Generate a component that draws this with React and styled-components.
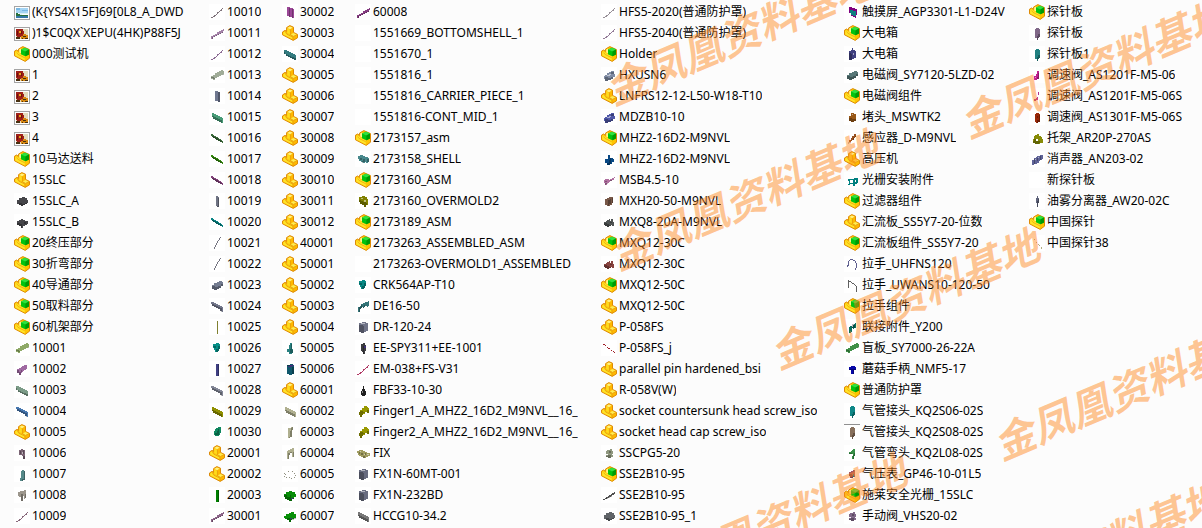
import React from 'react'
import styled, { createGlobalStyle } from 'styled-components'

// [label, shape, colour]
const COLUMNS = [
  [
    ['(K{YS4X15F]69[0L8_A_DWD', 'landscape'],
    [')1$C0QX`XEPU(4HK)P88F5J', 'flower'],
    ['000测试机', 'assembly'],
    ['1', 'flower'],
    ['2', 'flower'],
    ['3', 'flower'],
    ['4', 'flower'],
    ['10马达送料', 'assembly'],
    ['15SLC', 'part'],
    ['15SLC_A', 'gear', '#46464a'],
    ['15SLC_B', 'knob', '#46464a'],
    ['20终压部分', 'assembly'],
    ['30折弯部分', 'assembly'],
    ['40导通部分', 'assembly'],
    ['50取料部分', 'assembly'],
    ['60机架部分', 'assembly'],
    ['10001', 'plateUp', '#8faa68'],
    ['10002', 'hookUp', '#a06aa2'],
    ['10003', 'plateDown', '#7c9c88'],
    ['10004', 'boneDown', '#4878b0'],
    ['10005', 'part'],
    ['10006', 'clamp', '#7c6676'],
    ['10007', 'post', '#568a8a'],
    ['10008', 'stool', '#9c968c'],
    ['10009', 'thinUp', '#8a6a7c'],
  ],
  [
    ['10010', 'thinUp', '#80747c'],
    ['10011', 'rodUp', '#a482a8'],
    ['10012', 'thinUp', '#8c6c94'],
    ['10013', 'plateUp', '#a0ac98'],
    ['10014', 'slab', '#707890'],
    ['10015', 'rodDown', '#489c78'],
    ['10016', 'stickDown', '#3c6c3c'],
    ['10017', 'stickDown', '#348810'],
    ['10018', 'stickDown', '#84447c'],
    ['10019', 'pillar', '#707484'],
    ['10020', 'stickDown', '#088484'],
    ['10021', 'curve', '#747480'],
    ['10022', 'curve', '#747480'],
    ['10023', 'block', '#747c90'],
    ['10024', 'boneDown', '#74788c'],
    ['10025', 'line', '#808030'],
    ['10026', 'bracket', '#089088'],
    ['10027', 'bar', '#404084'],
    ['10028', 'boneDown', '#848898'],
    ['10029', 'rodDown', '#909000'],
    ['10030', 'oval', '#108860'],
    ['20001', 'part'],
    ['20002', 'part'],
    ['20003', 'bar', '#008000'],
    ['30001', 'rodUp', '#8c6488'],
  ],
  [
    ['30002', 'panel', '#9c4898'],
    ['30003', 'part'],
    ['30004', 'plateDown', '#347c80'],
    ['30005', 'part'],
    ['30006', 'part'],
    ['30007', 'part'],
    ['30008', 'part'],
    ['30009', 'part'],
    ['30010', 'part'],
    ['30011', 'part'],
    ['30012', 'part'],
    ['40001', 'part'],
    ['50001', 'part'],
    ['50002', 'part'],
    ['50003', 'part'],
    ['50004', 'part'],
    ['50005', 'boot', '#288080'],
    ['50006', 'canister', '#10586c'],
    ['60001', 'part'],
    ['60002', 'rodDown', '#b0b090'],
    ['60003', 'flag', '#b0b090'],
    ['60004', 'arch', '#b0b090'],
    ['60005', 'dots', '#909080'],
    ['60006', 'cloud', '#088c08'],
    ['60007', 'tree', '#089008'],
  ],
  [
    ['60008', 'rodUp', '#843c80'],
    ['1551669_BOTTOMSHELL_1', 'blank'],
    ['1551670_1', 'blank'],
    ['1551816_1', 'blank'],
    ['1551816_CARRIER_PIECE_1', 'blank'],
    ['1551816-CONT_MID_1', 'blank'],
    ['2173157_asm', 'assembly'],
    ['2173158_SHELL', 'shell', '#48888c'],
    ['2173160_ASM', 'assembly'],
    ['2173160_OVERMOLD2', 'ring', '#808000'],
    ['2173189_ASM', 'assembly'],
    ['2173263_ASSEMBLED_ASM', 'assembly'],
    ['2173263-OVERMOLD1_ASSEMBLED', 'blank'],
    ['CRK564AP-T10', 'bracket', '#088884'],
    ['DE16-50', 'bridge', '#347478'],
    ['DR-120-24', 'cube', '#707488'],
    ['EE-SPY311+EE-1001', 'sensor', '#3c3c40'],
    ['EM-038+FS-V31', 'thinUp', '#b03864'],
    ['FBF33-10-30', 'bottle', '#202020'],
    ['Finger1_A_MHZ2_16D2_M9NVL__16_', 'finger', '#989800'],
    ['Finger2_A_MHZ2_16D2_M9NVL__16_', 'finger', '#989800'],
    ['FIX', 'fixture', '#a09c60'],
    ['FX1N-60MT-001', 'cube', '#686c80'],
    ['FX1N-232BD', 'cube', '#686c80'],
    ['HCCG10-34.2', 'rodDown', '#787878'],
  ],
  [
    ['HFS5-2020(普通防护罩)', 'thinUp', '#989098'],
    ['HFS5-2040(普通防护罩)', 'thinUp', '#947c98'],
    ['Holder', 'assembly'],
    ['HXUSN6', 'spool', '#808ca4'],
    ['LNFRS12-12-L50-W18-T10', 'part'],
    ['MDZB10-10', 'spool', '#5058a8'],
    ['MHZ2-16D2-M9NVL', 'assembly'],
    ['MHZ2-16D2-M9NVL', 'gripper', '#084884'],
    ['MSB4.5-10', 'bolt', '#b070a0'],
    ['MXH20-50-M9NVL', 'slider', '#785848'],
    ['MXQ8-20A-M9NVL', 'table', '#505454'],
    ['MXQ12-30C', 'assembly'],
    ['MXQ12-30C', 'table', '#884440'],
    ['MXQ12-50C', 'assembly'],
    ['MXQ12-50C', 'part'],
    ['P-058FS', 'part'],
    ['P-058FS_j', 'pin', '#a02028'],
    ['parallel pin hardened_bsi', 'part'],
    ['R-058V(W)', 'part'],
    ['socket countersunk head screw_iso', 'part'],
    ['socket head cap screw_iso', 'part'],
    ['SSCPG5-20', 'bud', '#909880'],
    ['SSE2B10-95', 'assembly'],
    ['SSE2B10-95', 'rail', '#505050'],
    ['SSE2B10-95_1', 'gear', '#606468'],
  ],
  [
    ['触摸屏_AGP3301-L1-D24V', 'screen', '#800080'],
    ['大电箱', 'assembly'],
    ['大电箱', 'cabinet', '#404080'],
    ['电磁阀_SY7120-5LZD-02', 'block', '#587878'],
    ['电磁阀组件', 'assembly'],
    ['堵头_MSWTK2', 'plug', '#985818'],
    ['感应器_D-M9NVL', 'probe', '#985020'],
    ['高压机', 'part'],
    ['光栅安装附件', 'mount', '#008080'],
    ['过滤器组件', 'assembly'],
    ['汇流板_SS5Y7-20-位数', 'part'],
    ['汇流板组件_SS5Y7-20', 'assembly'],
    ['拉手_UHFNS120', 'handleRound', '#606090'],
    ['拉手_UWANS10-120-50', 'handle', '#606060'],
    ['拉手组件', 'assembly'],
    ['联接附件_Y200', 'joint', '#087060'],
    ['盲板_SY7000-26-22A', 'plateUp', '#409048'],
    ['蘑菇手柄_NMF5-17', 'mushroom', '#0808a8'],
    ['普通防护罩', 'assembly'],
    ['气管接头_KQ2S06-02S', 'fitting', '#108888'],
    ['气管接头_KQ2S08-02S', 'fitting', '#88705c', true],
    ['气管弯头_KQ2L08-02S', 'elbow', '#389048'],
    ['气压表_GP46-10-01L5', 'gauge', '#a85868'],
    ['施莱安全光栅_15SLC', 'assembly'],
    ['手动阀_VHS20-02', 'bud', '#806888'],
  ],
  [
    ['探针板', 'assembly'],
    ['探针板', 'fitting', '#806888'],
    ['探针板1', 'fitting', '#208080'],
    ['调速阀_AS1201F-M5-06', 'valve', '#c02090'],
    ['调速阀_AS1201F-M5-06S', 'valveThin', '#b03090'],
    ['调速阀_AS1301F-M5-06S', 'can', '#982808'],
    ['托架_AR20P-270AS', 'holder', '#888c08'],
    ['消声器_AN203-02', 'silencer', '#606498'],
    ['新探针板', 'blank'],
    ['油雾分离器_AW20-02C', 'separator', '#60647c'],
    ['中国探针', 'assembly'],
    ['中国探针38', 'needle', '#b0ac80'],
  ],
]

const WATERMARK = '金凤凰资料基地'

const WATERMARKS = [
  { x: 625, y: 81 },
  { x: 630, y: 246 },
  { x: 790, y: 345 },
  { x: 980, y: 114 },
  { x: 1013, y: 436 },
  { x: 657, y: 570 },
  { x: 974, y: 597 },
]

// two tone outlines of the model previews: d is the body, s the shaded side, l the lit side
const SHAPES = {
  gear: { d: 'M3 7h2V5h3V4h3v1h2v2h1v3h-1v1h-2v1H9v1H7v-1H5v-1H3z', s: 'M5 10h3v1h3v-1h2v1h-2v1H9v1H7v-1H5z' },
  knob: { d: 'M3 7h2V6h2V5h2v1h2v1h3v3h-1v1h-2v1H9v2H7v-2H5v-1H3z', s: 'M3 9h3v1h2v4H7v-2H5v-1H3zM10 8h2v2h-2z' },
  plateUp: { d: 'M2 9h2V8h2V6h2V5h2V4h2V3h2v1h1v3h-1v1h-2v1h-2v1H8v1H6v2H4v-1H2z', s: 'M2 10h3v1h3v-1h2V9h2V8h2V7h1v1h-3v1h-2v1H8v1H6v1H4v-1H2z' },
  hookUp: { d: 'M3 8h2V7h2V6h1V5h2V4h3v4h-1v1h-2v1H9v1H8v1H7v2H5v-2H3z', s: 'M3 9h2v2h2V9h1v2H7v3H5v-2H3z' },
  plateDown: { d: 'M2 4h3v1h2v1h2v1h2v1h2v1h1v5h-2v-1h-2v-1H8v-1H6v-1H4V8H2z', s: 'M2 6h1v2h2v1h2v1h2v1h3v1h2v2h-2v-1h-2v-1H8v-1H6v-1H4V8H2z' },
  boneDown: { d: 'M2 4h3v1h2v1h2v1h2v1h2v1h1v5h-1v-1h-2v-2H9v-1H7V9H5V8H3V6H2z', s: 'M3 6h2v1h2v1h2v1h2v1h2v4h-1v-1h-1v-2H9v-1H7V9H5V8H3z' },
  clamp: { d: 'M5 5h2V4h2v1h2v9H9v-3H8v-1H5z', s: 'M6 6h1v3H6zM9 5h1v4H9zM9 11h2v3H9z', l: 'M8 7h1v2H8z' },
  post: { d: 'M8 4h2v1h1v9H9v1H6v-3h1V5h1z', s: 'M10 5h1v9H9v1H8v-2h2z' },
  stool: { d: 'M4 5h2V4h4V3h2v8h-1v1h-1V9H9v5H7v-4H5V9H4z', s: 'M7 7h2v7H7zM11 7h1v4h-1z' },
  thinUp: { d: 'M2 13h2v1H2zM4 12h2v1H4zM5 11h2v1H5zM7 10h1v1H7zM8 8h2v1H9v1H8zM10 7h1v1h-1zM11 6h2v1h-2zM12 5h1v1h-1zM13 4h1v1h-1z' },
  rodUp: { d: 'M2 11h2v-1h2V9h2V7h2V6h2V5h2V4h1v2h-1v2h-2v1h-2v1H8v1H6v1H4v2H2z', s: 'M3 12h2v-1h2v-1h2V9h2V8h2V7h1v1h-2v1h-2v1H8v1H6v1H4v2H3z' },
  slab: { d: 'M6 3h3v1h2v10H9v-1H6z', s: 'M9 4h2v10H9z' },
  rodDown: { d: 'M3 4h2v1h2v1h2v1h2v1h2v1h1v5h-2v-1h-2v-1H8v-1H6v-1H4V8H3z', s: 'M3 7h2v1h2v1h2v1h2v1h2v3h-1v-1h-2v-1H8v-1H6v-1H4V8H3z' },
  stickDown: { d: 'M2 4h2v1h1v1h2v1h2v1h1v1h2v1h1v1h1v2h-1v-1h-2v-1H9v-1H7V9H6V8H4V7H3V6H2z', s: 'M3 6h2v1h2v1h2v1h1v1h2v1h1v1h-2v-1H9v-1H7V9H6V8H4V7H3z' },
  pillar: { d: 'M7 3h2v1h1v10H8v-1H7z', s: 'M9 5h1v9H8v-1h1z' },
  curve: { d: 'M11 2h1v1h-1zM10 3h1v2h-1zM9 5h1v1H9zM8 6h1v2H8zM7 8h1v2H7zM6 10h1v2H6zM5 12h1v2H5z' },
  block: { d: 'M3 8h2V6h3V5h2V4h3v1h1v4h-2v2h-2v1H8v1H5v-1H3z', s: 'M3 9h3v1h3V9h3V7h2v2h-2v2h-2v1H8v1H5v-1H3z' },
  line: { d: 'M8 2h1v13H8z' },
  bar: { d: 'M7 3h3v12H7z', s: 'M9 3h1v12H9z' },
  bracket: { d: 'M4 4h3V3h3v1h1v5h-1v2H9v1H6v-2H5V8H4z', s: 'M4 6h3v2H5V7H4zM9 6h2v3h-1v2H9v1H7V9h2z' },
  oval: { d: 'M7 4h2V3h3v6h-1v2h-1v1H6v-1H5V7h1V5h1z', s: 'M6 9h2V7h1V5h1v6H6z' },
  panel: { d: 'M5 3h3v1h3v1h1v9h-2v-1H7v-1H5z', s: 'M7 4h1v9H7zM10 5h1v9h-1z' },
  boot: { d: 'M8 3h2v6h1v4h-1v1H7v-2H5V9h2V5h1z', s: 'M9 4h1v6h1v3H8V9h1z' },
  canister: { d: 'M5 4h3V3h3v1h1v9h-2v1H7v-1H5z', s: 'M5 4h3v1H5zM10 6h2v7h-2z', r: 'M8 4h4v1h-2v1H6V5h2z' },
  flag: { d: 'M6 4h3V3h2v3h-1v7H8v1H6z', s: 'M10 3h1v3h-1v7H8v1H7v-1h1V7h1V4h1z' },
  arch: { d: 'M5 6h1V5h2V4h2V3h2v9h-2V8H8v2H7v4H5z', s: 'M8 7h2v1H8v2H7v4H6V8h2zM11 7h1v5h-1z' },
  dots: { d: 'M2 7h1v1H2zM3 8h1v1H3zM6 5h1v1H6zM4 11h1v1H4zM10 5h1v1h-1zM12 7h1v1h-1zM13 9h1v1h-1zM9 12h1v1H9zM7 11h1v1H7zM2 10h1v1H2zM12 11h1v1h-1z' },
  cloud: { d: 'M2 7h2V5h3V4h3v1h3v2h1v3h-2v2h-2v2H7v-1H5v-1H3v-2H2z', s: 'M2 8h3v2h3V8h1v3h3v1h-2v2H7v-1H5v-1H3v-2H2z', r: 'M9 11h2v1H9z' },
  tree: { d: 'M2 8h2V6h3V5h2V4h3v2h2v4h-2v1h-2v1H9v2H7v-2H5v-1H3v-1H2z', s: 'M5 10h3v1h3v-1h3v1h-2v1H9v2H7v-2H5z', r: 'M8 10h2v1H8z' },
  shell: { d: 'M3 5h2V4h3v1h2v1h3v1h1v4h-1v1h-2v-1h-1v1H8v-1H6v-1H4V8H3z', s: 'M5 7h2v2H5zM8 8h2v3H8v1H7v-2h1zM12 8h2v3h-2z' },
  ring: { d: 'M4 4h3V3h3v1h2v2h1v6h-2v2H9v-2H7v-1H5V9H4z', s: 'M4 7h2v1h2v1h3v1h1v2h-1v2H9v-2H7v-1H5V9H4z', l: 'M6 5h2v1H6zM9 7h2v2H9z' },
  bridge: { d: 'M3 9h2V8h1V6h2V5h2V4h3V3h1v5h-1v1h-1V8h-2v1H9v1H8v-1H7v1H6v1H5v3H3z', s: 'M4 9h2V7h1v2h2V7h1v2H9v1H8v-1H7v1H6v1H5v3H4z' },
  cube: { d: 'M4 4h3V3h4v1h2v8h-2v1H9v1H6v-1H4z', s: 'M4 6h4v1h1v7H6v-1H4z', l: 'M6 4h4v1H6z' },
  sensor: { d: 'M6 4h2V3h2v2h1v6h-1v3H8v-2H7v-1H6z', s: 'M8 6h1v8H8z', r: 'M9 6h2v2H9z' },
  bottle: { d: 'M8 4h1v3h1v2h1v4h-1v1H7v-1H6V9h1V7h1z', l: 'M7 9h1v2H7z' },
  finger: { d: 'M5 7h2V5h2V3h3v1h1v1h1v5h-2V9h-2v2H8v1H7v2H5v-2H4V9h1z', s: 'M5 8h3v1h2v1H8v2H7v2H5v-2H4V9h1zM12 7h2v3h-2z' },
  fixture: { d: 'M2 6h2V5h4v1h2v1h2v1h3v3h-2v1h-2v1H8v-1H6v-1H4v-1H3V8H2z', s: 'M4 7h1v2H4zM6 8h2v2H6zM10 8h1v2h-1zM8 11h2v2H8z', l: 'M5 6h1v1H5zM9 9h1v1H9zM12 9h2v1h-2z' },
  spool: { d: 'M4 8h2V6h2V5h2V4h3v3h1v3h-2v2h-2v1H7v1H4v-2H3V9h1z', s: 'M4 10h3v1h3v-1h2v2h-2v1H7v1H4zM10 5h3v2h-3z', l: 'M6 8h2V7h2v1H9v1H6z' },
  gripper: { d: 'M7 4h2v3h3v1h1v3h-2v2H9v1H6v-2H4V8h3z', s: 'M9 7h1v6H9v1H6v-2h2V9h1z' },
  bolt: { d: 'M3 8h1V7h4v1h1V7h2V6h2V5h1v1h-1v2h-2v1H9v1H8v1H6v2H4v-2H3z', s: 'M4 9h2v1H4zM9 8h2v1H9zM6 11h1v1H5v1H4v-2h2z' },
  slider: { d: 'M4 6h2V5h2V4h4v6h-1v2H9v1H6v-1H4z', s: 'M9 6h1v5H8v2H7V7h2zM11 5h1v5h-1z' },
  table: { d: 'M3 8h2V7h1V6h2V5h1v2h1V5h2v3h1v4h-2v-1h-1v1H8v1H6v-1H4v-1H3z', s: 'M3 9h3v1h2v1h2v1H8v1H6v-1H4v-1H3zM9 8h2v1H9z' },
  pin: { d: 'M2 4h2v1H2zM4 5h1v1H4zM6 7h1v1H6zM7 8h2v1H7zM10 10h1v1h-1zM12 11h1v1h-1zM13 12h1v1h-1z' },
  bud: { d: 'M6 5h3V4h2v2h1v3h-1v1h1v2h-2v1H7v-1H5v-2h2V9H5V6h1z', s: 'M8 6h2v2H8zM7 10h3v3H7v-1H5v-1h2z' },
  rail: { d: 'M2 12h2v-1h1v-1h2V9h1V8h2V7h1V6h2V5h1v2h-1v1h-2v1h-1v1H8v1H6v1H4v1H2z', s: 'M5 11h3v-1h2V9h1v1H9v1H7v1H5z' },
  screen: { d: 'M5 3h3v1h3v1h2v6h-1v3h-1v-1H9v-1H7V9H5z', t: 'M6 6h3v1h3v5H9v-1H7V9H6z' },
  cabinet: { d: 'M5 5h2V4h1V2h1v2h2v1h1v7h-2v1H8v1H5z', s: 'M5 7h2v1h1v6H5z', l: 'M9 7h1v2H9z' },
  plug: { d: 'M5 7h2V4h3v1h2v7h-2v1H7v-1H5z', s: 'M5 9h3v1h4v2h-2v1H7v-1H5z', l: 'M8 5h1v1H8z' },
  probe: { d: 'M10 4h2v3h-1v1h-1v2H8v1H7v1H5v-2h2V8h1V6h2z', s: 'M4 12h3v1H5v1H4zM11 6h1v1h-1v1h-1v2H9V8h2z' },
  mount: { d: 'M4 7h6V6h4v5h-1v1h-2v2H9v-2H6v1H4v-1h1V9H4zM6 8v3h3V8zM11 8v2h1V8z' },
  handle: { d: 'M4 3h1v8H4zM5 4h2v1H5zM7 5h1v1H7zM8 6h2v1H8zM10 7h1v1h-1zM11 8h1v1h-1zM12 9h1v6h-1z' },
  handleRound: { d: 'M4 5h1V4h1V3h3v1H6v1H5v5H4v1H3V9h1zM9 4h2v1H9zM11 5h1v2h-1zM12 7h1v5h-1v2h-1v-2h1z' },
  joint: { d: 'M5 8h1V7h2v1h1V6h1V5h1V4h1v5h-2v1H9v-1H8v4H7v1H5z', s: 'M8 5h2v4H8zM10 6h1v3h-1z' },
  mushroom: { d: 'M5 6h2V5h4v1h1v3h-2v4H7V9H5z', s: 'M5 8h7v1H5zM9 9h1v4H9z' },
  fitting: { d: 'M6 4h1V3h3v1h1v8h-1v1H9v2H8v-2H6z', s: 'M9 9h2v3h-1v1H9v2H8v-4h1z' },
  elbow: { d: 'M9 4h2v7h-1v3H8v-3h1V9H5V7h2V6h1V5h1z', s: 'M5 8h3v1H5zM10 8h1v3h-1v3H9v-4h1z' },
  gauge: { d: 'M5 6h2V5h2V4h2v7H9v1H6v-2H5z', s: 'M5 8h3v1h1v3H6v-2H5z', t: 'M9 8h1v3H9z' },
  valve: { d: 'M8 4h2v8H8v1H5v-4h2V7h1z', s: 'M9 6h1v6H8v-2h1z', l: 'M6 10h1v1H6z' },
  valveThin: { d: 'M9 4h1v3H9zM8 9h1v3H7v1H5v-2h2v-1h1z' },
  can: { d: 'M6 5h1V4h3v1h1v8H9v1H7v-1H6z', s: 'M8 7h1v2H8zM10 6h1v7H9v1H8v-3h2z' },
  holder: { d: 'M5 6h1V5h2V4h2v2h2v1h1v2h1v4h-3v1H6v-1H4V9h1zM7 9v2h2V9z', s: 'M5 9h2v2h4v2h-1v1H6v-1H4v-2h1z' },
  silencer: { d: 'M3 9h2V7h2V6h1V5h3V4h3v4h-1v1h-2v1h-1v2H8v1H5v1H3z', s: 'M5 8h1v5H5zM8 7h1v3H8zM11 5h1v4h-1z', l: 'M9 6h1v1H9zM6 8h1v1H6z' },
  separator: { d: 'M8 3h1v2h1v5H9v4H8v-4H7V5h1z', s: 'M9 6h1v4H9v4H8V8h1z' },
  needle: { d: 'M5 4h1v1H5zM7 7h1v1H7zM9 9h1v1H9zM10 10h1v1h-1zM12 12h1v2h-1z' },
}

const AssemblyIcon = () => (
  <Glyph viewBox="0 0 16 16" aria-hidden="true">
    <path
      d="M.5 5.2L2.6 4l2 1.4V3L8.8.6l6.7 3v8.6l-4.3 3.2L.5 9.8z"
      fill="#ffc400"
      stroke="#dd8a06"
    />
    <path d="M1.2 6l1.4-.8 2 1.8 1.2.4 5 3.2v3.8L1.2 9.4z" fill="#ffe428" />
    <path d="M2.6 6.4L4 8.4l6.8 3.4" fill="none" stroke="#f0a808" strokeWidth="0.8" />
    <path d="M5.2 3.4L7 2.4v4.8L5.2 6.4z" fill="#fff58c" />
    <path d="M7 3.6L11 1.8l4 1.8v4.8l-3.6 1.8L7 8.2z" fill="#00c410" />
    <path d="M7 3.6L11 1.8l4 1.8-3.6 1.8z" fill="#30e040" />
    <path d="M11.4 5.4l3.6-1.8v4.8l-3.6 1.8z" fill="#009a04" />
  </Glyph>
)

const PartIcon = () => (
  <Glyph viewBox="0 0 16 16" aria-hidden="true">
    <path
      d="M.5 7L3 5.4l1.6.9V2.6L7.8.6l3.7 1.6v5.2l4 2v3.4L11.2 15.4.5 9.8z"
      fill="#ffb800"
      stroke="#dd8a06"
    />
    <path d="M1.2 7.4L3 6.2l2.2 2.6 5.4 2.6v2.8L1.2 9.4z" fill="#ffe428" />
    <path d="M5.2 3.4l3 1.4v4.8l-3-1.6z" fill="#ffdc1c" />
    <path d="M5.2 3L7.8 1.4l2.8 1.2-2.4 1.6z" fill="#fff380" />
    <path d="M8.6 9.6l2.8-1.6 3.2 1.6-3 1.8z" fill="#ffec50" />
    <path d="M3.2 6.4l1.6 2.8 6.2 3V15M8.4 4.6v5l3 1.8 3.4-1.6" fill="none" stroke="#e59a0c" strokeWidth="0.8" />
  </Glyph>
)

const LandscapeIcon = () => (
  <Glyph viewBox="0 0 16 16" shapeRendering="crispEdges" aria-hidden="true">
    <path d="M0 2h16v14H0z" fill="#a4a4a4" />
    <path d="M1 3h14v12H1z" fill="#fff" />
    <path d="M2 4h12v5H2z" fill="#a4d4f4" />
    <path d="M2 4h4v2H2zM8 6h6v1H8z" fill="#78b8e4" />
    <path d="M2 9h2v1h4v1h6v1H2z" fill="#28703c" />
    <path d="M2 12h12v2H2z" fill="#3478a8" />
    <path d="M5 9h9v1H8v1H6v-1H5z" fill="#d8f0f4" />
  </Glyph>
)

const FlowerIcon = () => (
  <Glyph viewBox="0 0 16 16" shapeRendering="crispEdges" aria-hidden="true">
    <path d="M0 2h16v14H0z" fill="#a4a4a4" />
    <path d="M1 3h14v12H1z" fill="#fff" />
    <path d="M2 4h12v10H2z" fill="#e4dcbc" />
    <path d="M2 4h7v2h1v5H8v1H3v-1H2z" fill="#a02018" />
    <path d="M3 6h1v4H3zM7 6h1v3H7z" fill="#701008" />
    <path d="M5 6h2v2H5z" fill="#e8a818" />
    <path d="M7 11h2V9h3v1h2v4H7z" fill="#d88810" />
    <path d="M9 11h3v1H9zM8 13h1v1H8zM11 13h3v1h-3zM2 12h4v2H2z" fill="#483010" />
  </Glyph>
)

const ModelIcon = ({ shape, color, topLine }) => {
  const { d, s, l, r, t } = SHAPES[shape]
  return (
    <Preview viewBox="0 0 16 16" shapeRendering="crispEdges" aria-hidden="true">
      <path d={d} fill={color} fillRule="evenodd" />
      {s && <path d={s} fill="#000" fillOpacity="0.28" />}
      {l && <path d={l} fill="#fff" fillOpacity="0.5" />}
      {r && <path d={r} fill="#403078" />}
      {t && <path d={t} fill="#108080" />}
      {topLine && <path d="M0 0h16v1H0z" fill="#909090" />}
    </Preview>
  )
}

const FileIcon = ({ shape, color, topLine }) => {
  if (shape === 'assembly') return <AssemblyIcon />
  if (shape === 'part') return <PartIcon />
  if (shape === 'landscape') return <LandscapeIcon />
  if (shape === 'flower') return <FlowerIcon />
  if (shape === 'blank') return <Preview viewBox="0 0 16 16" aria-hidden="true" />
  return <ModelIcon shape={shape} color={color} topLine={topLine} />
}

const App = () => {
  return (
    <Pane>
      <GlobalStyle />
      <Columns>
        {COLUMNS.map((files, i) => (
          <FileList key={i}>
            {files.map(([label, shape, color, topLine], j) => (
              <FileRow key={j}>
                <FileIcon shape={shape} color={color} topLine={topLine} />
                <FileName>{label}</FileName>
              </FileRow>
            ))}
          </FileList>
        ))}
      </Columns>
      {WATERMARKS.map(({ x, y }) => (
        <Watermark key={`${x}-${y}`} $x={x} $y={y} aria-hidden="true">
          {WATERMARK}
        </Watermark>
      ))}
    </Pane>
  )
}

export default App

const GlobalStyle = createGlobalStyle`
  body {
    margin: 0;
    background: #fcfcfc;
  }
`

const Pane = styled.main`
  position: relative;
  min-height: 100vh;
  overflow: hidden;
  box-sizing: border-box;
  padding: 2px 0 1px 14px;
  background: #fcfcfc;
  color: #000;
  font-family: 'Noto Sans', 'Noto Sans CJK SC', sans-serif;
  font-size: 12px;
  line-height: 16px;
`

const Columns = styled.div`
  display: grid;
  grid-template-columns:
    minmax(0, 195fr) minmax(0, 73fr) minmax(0, 73fr) minmax(0, 246fr)
    minmax(0, 243fr) minmax(0, 185fr) minmax(0, 173fr);
`

const FileList = styled.ul`
  margin: 0;
  padding: 0;
  list-style: none;
`

const FileRow = styled.li`
  display: flex;
  align-items: flex-start;
  gap: 2px;
  height: 21px;
  box-sizing: border-box;
  padding-top: 2px;
`

const FileName = styled.span`
  min-width: 0;
  overflow: hidden;
  white-space: nowrap;
`

const Glyph = styled.svg`
  display: block;
  flex: none;
  width: 16px;
  height: 16px;
`

const Preview = styled(Glyph)`
  background: #fff;
`

const Watermark = styled.span`
  position: absolute;
  left: ${({ $x }) => $x - 20}px;
  top: ${({ $y }) => $y - 20}px;
  transform: rotate(-23deg);
  transform-origin: 20px 20px;
  color: rgba(255, 135, 30, 0.47);
  font-family: 'Noto Sans CJK SC', sans-serif;
  font-size: 41px;
  font-style: italic;
  font-weight: 700;
  line-height: 40px;
  white-space: nowrap;
  pointer-events: none;
`
